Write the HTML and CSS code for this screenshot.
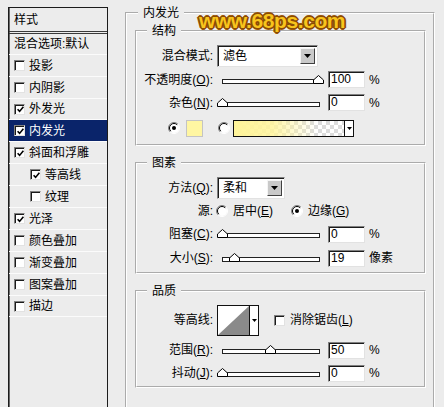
FILE: index.html
```html
<!DOCTYPE html>
<html lang="zh-CN">
<head>
<meta charset="utf-8">
<title>图层样式 - 内发光</title>
<link rel="stylesheet" href="styles.css">
</head>
<body>
<div class="dialog">
  <aside class="styles-panel">
    <div class="panel-head">样式</div>
    <div class="panel-blend">混合选项:默认</div>
    <ul class="layer-list">
      <li class="layer"><span class="check"></span>投影</li>
      <li class="layer"><span class="check"></span>内阴影</li>
      <li class="layer layer--short"><span class="check"><svg class="tick" width="7" height="7" viewBox="0 0 7 7"><path d="M0.6 3.2 L2.6 5.4 L6.4 0.8" fill="none" stroke="#000" stroke-width="1.6"/></svg></span>外发光</li>
      <li class="layer is-selected"><span class="check"><svg class="tick" width="7" height="7" viewBox="0 0 7 7"><path d="M0.6 3.2 L2.6 5.4 L6.4 0.8" fill="none" stroke="#000" stroke-width="1.6"/></svg></span>内发光</li>
      <li class="layer"><span class="check"><svg class="tick" width="7" height="7" viewBox="0 0 7 7"><path d="M0.6 3.2 L2.6 5.4 L6.4 0.8" fill="none" stroke="#000" stroke-width="1.6"/></svg></span>斜面和浮雕</li>
      <li class="layer layer--sub"><span class="check"><svg class="tick" width="7" height="7" viewBox="0 0 7 7"><path d="M0.6 3.2 L2.6 5.4 L6.4 0.8" fill="none" stroke="#000" stroke-width="1.6"/></svg></span>等高线</li>
      <li class="layer layer--sub"><span class="check"></span>纹理</li>
      <li class="layer"><span class="check"><svg class="tick" width="7" height="7" viewBox="0 0 7 7"><path d="M0.6 3.2 L2.6 5.4 L6.4 0.8" fill="none" stroke="#000" stroke-width="1.6"/></svg></span>光泽</li>
      <li class="layer"><span class="check"></span>颜色叠加</li>
      <li class="layer"><span class="check"></span>渐变叠加</li>
      <li class="layer"><span class="check"></span>图案叠加</li>
      <li class="layer layer--last"><span class="check"></span>描边</li>
    </ul>
  </aside>

  <fieldset class="group outer">
    <legend>内发光</legend>

    <fieldset class="group section section--structure">
      <legend>结构</legend>
      <div class="row row--select">
        <span class="label">混合模式:</span>
        <div class="select select--wide"><span class="select-value">滤色</span><span class="select-button"><svg width="7" height="4" viewBox="0 0 7 4"><polygon points="0,0 7,0 3.5,4" fill="#000"/></svg></span></div>
      </div>
      <div class="row row--slider">
        <span class="label">不透明度(<u>O</u>):</span>
        <div class="slider"><span class="thumb" style="left:100%"><svg width="11" height="9" viewBox="0 0 11 9"><polygon points="0.5,8.5 0.5,5 5.5,0.5 10.5,5 10.5,8.5" fill="#fff" stroke="#000"/></svg></span></div>
        <span class="field">100</span><span class="unit">%</span>
      </div>
      <div class="row row--slider">
        <span class="label">杂色(<u>N</u>):</span>
        <div class="slider"><span class="thumb" style="left:0%"><svg width="11" height="9" viewBox="0 0 11 9"><polygon points="0.5,8.5 0.5,5 5.5,0.5 10.5,5 10.5,8.5" fill="#fff" stroke="#000"/></svg></span></div>
        <span class="field">0</span><span class="unit">%</span>
      </div>
      <div class="row row--color">
        <span class="radio"><svg width="12" height="12" viewBox="0 0 12 12"><circle cx="6" cy="6" r="5" fill="#fff"/><path d="M2.1 9.9 A5.5 5.5 0 0 1 9.9 2.1" fill="none" stroke="#808080"/><path d="M9.9 2.1 A5.5 5.5 0 0 1 2.1 9.9" fill="none" stroke="#fff"/><path d="M2.8 9.2 A4.5 4.5 0 0 1 9.2 2.8" fill="none" stroke="#000"/><circle cx="6" cy="6" r="2" fill="#000"/></svg></span>
        <span class="swatch"></span>
        <span class="radio radio--gap"><svg width="12" height="12" viewBox="0 0 12 12"><circle cx="6" cy="6" r="5" fill="#fff"/><path d="M2.1 9.9 A5.5 5.5 0 0 1 9.9 2.1" fill="none" stroke="#808080"/><path d="M9.9 2.1 A5.5 5.5 0 0 1 2.1 9.9" fill="none" stroke="#fff"/><path d="M2.8 9.2 A4.5 4.5 0 0 1 9.2 2.8" fill="none" stroke="#000"/></svg></span>
        <div class="gradient-picker"><span class="gradient-fill"></span><span class="picker-arrow"><svg width="5" height="3" viewBox="0 0 5 3"><polygon points="0,0 5,0 2.5,3" fill="#000"/></svg></span></div>
      </div>
    </fieldset>

    <fieldset class="group section section--elements">
      <legend>图素</legend>
      <div class="row row--select">
        <span class="label">方法(<u>Q</u>):</span>
        <div class="select select--narrow"><span class="select-value">柔和</span><span class="select-button"><svg width="7" height="4" viewBox="0 0 7 4"><polygon points="0,0 7,0 3.5,4" fill="#000"/></svg></span></div>
      </div>
      <div class="row row--radio">
        <span class="label">源:</span>
        <span class="option"><span class="radio"><svg width="12" height="12" viewBox="0 0 12 12"><circle cx="6" cy="6" r="5" fill="#fff"/><path d="M2.1 9.9 A5.5 5.5 0 0 1 9.9 2.1" fill="none" stroke="#808080"/><path d="M9.9 2.1 A5.5 5.5 0 0 1 2.1 9.9" fill="none" stroke="#fff"/><path d="M2.8 9.2 A4.5 4.5 0 0 1 9.2 2.8" fill="none" stroke="#000"/></svg></span><span class="option-text">居中(<u>E</u>)</span></span>
        <span class="option option--second"><span class="radio"><svg width="12" height="12" viewBox="0 0 12 12"><circle cx="6" cy="6" r="5" fill="#fff"/><path d="M2.1 9.9 A5.5 5.5 0 0 1 9.9 2.1" fill="none" stroke="#808080"/><path d="M9.9 2.1 A5.5 5.5 0 0 1 2.1 9.9" fill="none" stroke="#fff"/><path d="M2.8 9.2 A4.5 4.5 0 0 1 9.2 2.8" fill="none" stroke="#000"/><circle cx="6" cy="6" r="2" fill="#000"/></svg></span><span class="option-text">边缘(<u>G</u>)</span></span>
      </div>
      <div class="row row--slider row--loose">
        <span class="label">阻塞(<u>C</u>):</span>
        <div class="slider"><span class="thumb" style="left:0%"><svg width="11" height="9" viewBox="0 0 11 9"><polygon points="0.5,8.5 0.5,5 5.5,0.5 10.5,5 10.5,8.5" fill="#fff" stroke="#000"/></svg></span></div>
        <span class="field">0</span><span class="unit">%</span>
      </div>
      <div class="row row--slider row--loose">
        <span class="label">大小(<u>S</u>):</span>
        <div class="slider"><span class="thumb" style="left:13%"><svg width="11" height="9" viewBox="0 0 11 9"><polygon points="0.5,8.5 0.5,5 5.5,0.5 10.5,5 10.5,8.5" fill="#fff" stroke="#000"/></svg></span></div>
        <span class="field">19</span><span class="unit">像素</span>
      </div>
    </fieldset>

    <fieldset class="group section section--quality">
      <legend>品质</legend>
      <div class="row row--contour">
        <span class="label">等高线:</span>
        <div class="contour">
          <svg class="contour-curve" width="31" height="29" viewBox="0 0 31 29"><rect width="31" height="29" fill="#fff"/><polygon points="0,29 31,0 31,29" fill="#8a8a8a"/></svg>
          <span class="picker-arrow"><svg width="5" height="3" viewBox="0 0 5 3"><polygon points="0,0 5,0 2.5,3" fill="#000"/></svg></span>
        </div>
        <span class="check check--inline"></span><span class="check-label">消除锯齿(<u>L</u>)</span>
      </div>
      <div class="row row--slider row--loose">
        <span class="label">范围(<u>R</u>):</span>
        <div class="slider"><span class="thumb" style="left:50%"><svg width="11" height="9" viewBox="0 0 11 9"><polygon points="0.5,8.5 0.5,5 5.5,0.5 10.5,5 10.5,8.5" fill="#fff" stroke="#000"/></svg></span></div>
        <span class="field">50</span><span class="unit">%</span>
      </div>
      <div class="row row--slider row--tight">
        <span class="label">抖动(<u>J</u>):</span>
        <div class="slider"><span class="thumb" style="left:0%"><svg width="11" height="9" viewBox="0 0 11 9"><polygon points="0.5,8.5 0.5,5 5.5,0.5 10.5,5 10.5,8.5" fill="#fff" stroke="#000"/></svg></span></div>
        <span class="field">0</span><span class="unit">%</span>
      </div>
    </fieldset>
  </fieldset>

  <div class="watermark">www.68ps.com</div>
</div>
</body>
</html>
```

FILE: styles.css
```css
* { box-sizing: border-box; }

html, body {
  margin: 0;
  padding: 0;
}

body {
  width: 444px;
  height: 407px;
  overflow: hidden;
  background: #ececec;
  color: #000;
  font-family: "Liberation Sans", "Noto Sans CJK SC", sans-serif;
  font-size: 12px;
  line-height: 14px;
}

.dialog {
  position: relative;
  display: flex;
  align-items: flex-start;
  height: 407px;
}

/* ---------- left styles list ---------- */
.styles-panel {
  flex: none;
  margin: 7px 0 0 8px;
  width: 100px;
  height: 400px;
  border: 1px solid #1c1c1c;
  border-bottom: 0;
  box-shadow: inset 1px 0 0 #6a6a6a;
}

.panel-head {
  height: 26px;
  padding-left: 5px;
  display: flex;
  align-items: center;
  border-bottom: 3px double #3a3a3a;
}

.panel-blend {
  height: 20px;
  padding-left: 5px;
  display: flex;
  align-items: center;
}

.layer-list {
  list-style: none;
  margin: 0;
  padding: 0;
}

.layer {
  height: 22px;
  display: flex;
  align-items: center;
  gap: 4px;
  padding-left: 5px;
  border-top: 1px solid #fbfbfb;
}

.layer--short { height: 21px; }
.layer--sub { padding-left: 21px; }
.layer--last { border-bottom: 1px solid #fbfbfb; }

.layer.is-selected {
  background: #0a246a;
  color: #fff;
}

.check {
  flex: none;
  width: 11px;
  height: 11px;
  display: flex;
  align-items: center;
  justify-content: center;
  background: #fff;
  border: 1px solid;
  border-color: #808080 #e2e2e2 #e2e2e2 #808080;
  box-shadow: inset 1px 1px 0 #1a1a1a;
}

.tick { display: block; margin: 1px 0 0 1px; }

/* ---------- group boxes ---------- */
.group {
  margin: 0;
  min-width: 0;
  border: 2px groove #ffffff;
}

.group > legend {
  padding: 0 5px;
  line-height: 14px;
  font-size: 12px;
}

.outer {
  flex: none;
  margin: 6px 0 0 17px;
  width: 310px;
  height: 401px;
  padding: 4px 7px 0 8px;
  border-bottom: 0;
}

.outer > legend { margin-left: 3px; }

.section {
  width: 291px;
  padding: 5px 0 2px 0;
}

.section > legend { margin-left: 10px; }

.section--elements { margin-top: 10px; }
.section--quality { margin-top: 10px; padding-top: 4px; }

/* ---------- rows ---------- */
.row {
  display: flex;
  align-items: center;
  white-space: nowrap;
}

.row--select { height: 25px; }
.row--slider { height: 23px; }
.row--loose { height: 24px; }
.row--tight { height: 22px; }
.row--radio { height: 22px; }
.row--color { height: 28px; padding-left: 31px; }
.row--contour { height: 36px; }

.label {
  flex: none;
  width: 76px;
  margin-right: 4px;
  text-align: right;
}

.row--radio .label { margin-right: 3px; }

/* select */
.select {
  flex: none;
  display: flex;
  height: 22px;
  padding: 2px;
  background: #fff;
  border: 1px solid;
  border-color: #808080 #e2e2e2 #e2e2e2 #808080;
  box-shadow: inset 1px 1px 0 #1a1a1a;
}

.select--wide { width: 101px; }
.select--narrow { width: 68px; }

.select-value {
  flex: 1;
  padding-left: 3px;
  line-height: 16px;
}

.select-button {
  flex: none;
  width: 15px;
  display: flex;
  align-items: center;
  justify-content: center;
  background: #c9c9c9;
  border: 1px solid;
  border-color: #f4f4f4 #404040 #404040 #f4f4f4;
}

.select-button svg { display: block; }

/* slider */
.slider {
  flex: none;
  position: relative;
  width: 98px;
  height: 5px;
  margin: 3px 7px 0 5px;
  background: #fff;
  border: 1px solid #222;
}

.thumb {
  position: absolute;
  bottom: -1px;
  margin-left: -6px;
  width: 11px;
  height: 9px;
}

.thumb svg { display: block; }

/* numeric field */
.field {
  flex: none;
  width: 37px;
  height: 17px;
  margin-left: 1px;
  padding-left: 2px;
  line-height: 15px;
  background: #fff;
  border: 1px solid;
  border-color: #808080 #e2e2e2 #e2e2e2 #808080;
  box-shadow: inset 1px 1px 0 #1a1a1a;
}

.unit { margin-left: 4px; }

/* radio */
.radio {
  flex: none;
  width: 12px;
  height: 12px;
}

.radio svg { display: block; }

.option {
  display: flex;
  align-items: center;
  gap: 5px;
}

.option--second { margin-left: 18px; }

/* color row */
.swatch {
  flex: none;
  width: 17px;
  height: 17px;
  margin-left: 6px;
  background: #fff6a2;
  border: 1px solid #c4c4c4;
}

.radio--gap { margin-left: 15px; }

.gradient-picker {
  flex: none;
  display: flex;
  width: 121px;
  height: 17px;
  margin-left: 3px;
  border: 1px solid #111;
  background: #fff;
}

.gradient-fill {
  flex: 1;
  background:
    linear-gradient(to right, #fff49a 0%, rgba(255, 244, 154, 0.85) 35%, rgba(255, 244, 154, 0) 75%),
    repeating-conic-gradient(#dcdcdc 0 25%, #ffffff 0 50%) 0 0 / 8px 8px;
}

.picker-arrow {
  flex: none;
  width: 9px;
  display: flex;
  align-items: center;
  justify-content: center;
  background: #fff;
  border-left: 1px solid #111;
}

.picker-arrow svg { display: block; }

/* contour */
.contour {
  flex: none;
  display: flex;
  width: 42px;
  height: 31px;
  border: 1px solid #111;
  box-shadow: inset 1px 1px 0 #444;
  background: #fff;
}

.contour-curve { display: block; flex: none; }

.check--inline { margin-left: 15px; }
.check-label { margin-left: 5px; }

/* ---------- watermark ---------- */
.watermark {
  position: absolute;
  left: 199px;
  top: 10px;
  font-family: "Liberation Sans", sans-serif;
  font-weight: bold;
  font-size: 21px;
  line-height: 21px;
  letter-spacing: -0.4px;
  color: #f8c51c;
  text-shadow:
    1px 0 0 #8a4b06, -1px 0 0 #8a4b06, 0 1px 0 #8a4b06, 0 -1px 0 #8a4b06,
    1px 1px 0 #8a4b06, -1px -1px 0 #8a4b06, 1px -1px 0 #8a4b06, -1px 1px 0 #8a4b06,
    2px 0 0 #9c5a0c, -2px 0 0 #9c5a0c, 0 2px 0 #9c5a0c, 0 -2px 0 #9c5a0c;
}
```
